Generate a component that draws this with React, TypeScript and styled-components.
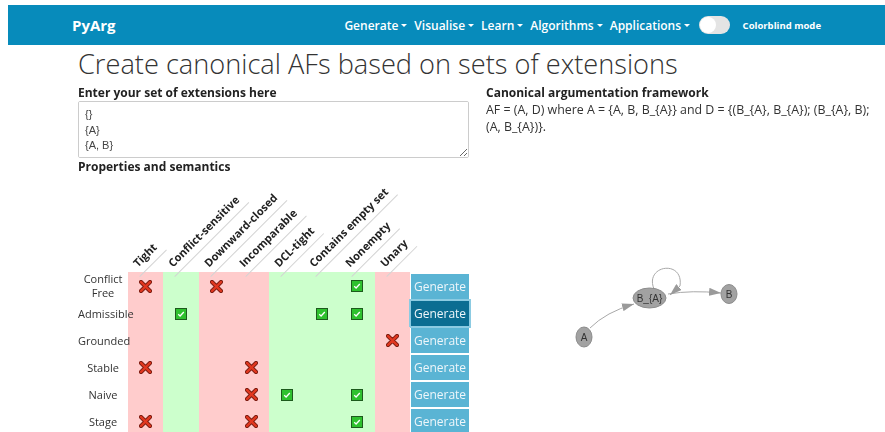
import styled, { createGlobalStyle } from 'styled-components';

const GlobalStyle = createGlobalStyle`
  body {
    margin: 0;
    font-family: "Open Sans", "Liberation Sans", sans-serif;
    color: #333;
    background: #fff;
  }
`;

type Mark = 'x' | 'ok';

const properties = [
  { name: 'Tight', holds: false },
  { name: 'Conflict-sensitive', holds: true },
  { name: 'Downward-closed', holds: false },
  { name: 'Incomparable', holds: false },
  { name: 'DCL-tight', holds: true },
  { name: 'Contains empty set', holds: true },
  { name: 'Nonempty', holds: true },
  { name: 'Unary', holds: false },
];

const semantics: { name: string; marks: Record<number, Mark>; active?: boolean }[] = [
  { name: 'Conflict Free', marks: { 0: 'x', 2: 'x', 6: 'ok' } },
  { name: 'Admissible', marks: { 1: 'ok', 5: 'ok', 6: 'ok' }, active: true },
  { name: 'Grounded', marks: { 7: 'x' } },
  { name: 'Stable', marks: { 0: 'x', 3: 'x' } },
  { name: 'Naive', marks: { 3: 'x', 4: 'ok', 6: 'ok' } },
  { name: 'Stage', marks: { 0: 'x', 3: 'x', 6: 'ok' } },
];

const CrossIcon = () => (
  <svg width="13" height="13" viewBox="0 0 13 13">
    <path d="M2 2 L11 11 M11 2 L2 11" stroke="#7a1d12" strokeWidth="4.2" strokeLinecap="round" />
    <path d="M2 2 L11 11 M11 2 L2 11" stroke="#e2371f" strokeWidth="2.4" strokeLinecap="round" />
  </svg>
);

const CheckIcon = () => (
  <svg width="12" height="12" viewBox="0 0 12 12">
    <rect x="0.5" y="0.5" width="11" height="11" fill="#2ec12e" stroke="#1d5a1d" />
    <path d="M3.2 6.3 L5.1 8 L8.8 4" fill="none" stroke="#fff" strokeWidth="1.3" />
  </svg>
);

export default function App() {
  return (
    <>
      <GlobalStyle />
      <Page>
        <Navbar>
          <Brand>PyArg</Brand>
          <NavRight>
            {['Generate', 'Visualise', 'Learn', 'Algorithms', 'Applications'].map((item) => (
              <NavItem key={item}>
                {item}
                <Caret />
              </NavItem>
            ))}
            <Switch>
              <Knob />
            </Switch>
            <SwitchLabel>Colorblind mode</SwitchLabel>
          </NavRight>
        </Navbar>

        <Main>
          <Title>Create canonical AFs based on sets of extensions</Title>
          <Columns>
            <LeftCol>
              <Label>Enter your set of extensions here</Label>
              <ExtensionsInput defaultValue={'{}\n{A}\n{A, B}'} />
              <Label>Properties and semantics</Label>
              <PropTable>
                <colgroup>
                  <col style={{ width: 50 }} />
                  {properties.map((p) => (
                    <col key={p.name} style={{ width: 35.25 }} />
                  ))}
                  <col style={{ width: 59 }} />
                </colgroup>
                <thead>
                  <tr>
                    <HeadCell />
                    {properties.map((p) => (
                      <HeadCell key={p.name}>
                        <HeadLabel>{p.name}</HeadLabel>
                      </HeadCell>
                    ))}
                    <HeadCell />
                  </tr>
                </thead>
                <tbody>
                  {semantics.map((s) => (
                    <tr key={s.name}>
                      <RowName>{s.name}</RowName>
                      {properties.map((p, i) => (
                        <MarkCell key={p.name} $holds={p.holds}>
                          {s.marks[i] === 'x' && <CrossIcon />}
                          {s.marks[i] === 'ok' && <CheckIcon />}
                        </MarkCell>
                      ))}
                      <ButtonCell>
                        <GenerateButton $active={s.active}>Generate</GenerateButton>
                      </ButtonCell>
                    </tr>
                  ))}
                </tbody>
              </PropTable>
            </LeftCol>

            <RightCol>
              <Label>Canonical argumentation framework</Label>
              <Description>
                AF = (A, D) where A = {'{A, B, B_{A}}'} and D = {'{(B_{A}, B_{A}); (B_{A}, B); (A, B_{A})}'}.
              </Description>
              <Graph width="399" height="292" viewBox="0 0 399 292">
                <defs>
                  <marker
                    id="arrowhead"
                    viewBox="0 0 12 8"
                    refX="12"
                    refY="4"
                    markerWidth="12"
                    markerHeight="8"
                    markerUnits="userSpaceOnUse"
                    orient="auto"
                  >
                    <path d="M0 0 L12 4 L0 8 Z" fill="#9a9a9a" />
                  </marker>
                </defs>
                {/* A -> B_{A} */}
                <Edge d="M104 187 Q120 171 148 163" markerEnd="url(#arrowhead)" />
                {/* B_{A} -> B */}
                <Edge d="M182 153 Q206 149 235 152" markerEnd="url(#arrowhead)" />
                {/* B_{A} attacks itself */}
                <Edge d="M168 148 C158 124 198 118 194 145 L184 154" markerEnd="url(#arrowhead)" />
                <Node cx="163.5" cy="157" rx="16.5" ry="10" />
                <NodeText x="163.5" y="160.5">B_{'{A}'}</NodeText>
                <Node cx="243" cy="153" rx="8" ry="9.5" />
                <NodeText x="243" y="156.5">B</NodeText>
                <Node cx="98" cy="196" rx="8" ry="10" />
                <NodeText x="98" y="199.5">A</NodeText>
              </Graph>
            </RightCol>
          </Columns>
        </Main>
      </Page>
    </>
  );
}

const Page = styled.div`
  padding: 5px 0 0 8px;
  overflow: hidden;
  height: 427px;
`;

const Navbar = styled.nav`
  height: 40px;
  background: #078bbb;
  display: flex;
  align-items: center;
  justify-content: space-between;
  padding: 0 64px;
`;

const Brand = styled.div`
  color: #fff;
  font-size: 15px;
  font-weight: 700;
`;

const NavRight = styled.div`
  display: flex;
  align-items: center;
`;

const NavItem = styled.div`
  color: #fff;
  font-size: 12px;
  font-weight: 600;
  padding: 0 3.5px;
  display: flex;
  align-items: center;
`;

const Caret = styled.span`
  display: inline-block;
  margin-left: 3px;
  border-left: 3px solid transparent;
  border-right: 3px solid transparent;
  border-top: 3px solid #fff;
`;

const Switch = styled.div`
  width: 31px;
  height: 18px;
  border-radius: 9px;
  background: #e4e4e4;
  margin-left: 5px;
  display: flex;
  align-items: center;
  padding: 0 1px;
  box-sizing: border-box;
`;

const Knob = styled.div`
  width: 16px;
  height: 16px;
  border-radius: 50%;
  background: #fff;
`;

const SwitchLabel = styled.div`
  color: #fff;
  font-size: 9.5px;
  font-weight: 700;
  margin-left: 13px;
`;

const Main = styled.main`
  padding-left: 70px;
`;

const Title = styled.h1`
  margin: 2px 0 0;
  font-size: 27.2px;
  font-weight: 300;
  line-height: 34px;
  color: #333;
`;

const Columns = styled.div`
  display: flex;
  gap: 16px;
  margin-top: 3px;
`;

const LeftCol = styled.div`
  width: 392px;
  flex-shrink: 0;
`;

const RightCol = styled.div`
  flex: 1;
  min-width: 0;
  padding-right: 10px;
`;

const Label = styled.div`
  font-size: 12px;
  font-weight: 700;
  line-height: 17px;
  color: #222;
`;

const ExtensionsInput = styled.textarea`
  display: block;
  width: 391px;
  height: 57px;
  box-sizing: border-box;
  margin: 0;
  padding: 5px 6px;
  font-family: "Liberation Sans", Arial, sans-serif;
  font-size: 11px;
  line-height: 15.5px;
  color: #444;
  border: 1px solid #ccc;
  border-radius: 2px;
  resize: vertical;
`;

const Description = styled.div`
  font-size: 12.4px;
  line-height: 17px;
  color: #333;
`;

const PropTable = styled.table`
  border-collapse: collapse;
  border-spacing: 0;
  table-layout: fixed;
  width: 391px;
`;

const HeadCell = styled.th`
  height: 97px;
  padding: 0;
  position: relative;
`;

const HeadLabel = styled.div`
  position: absolute;
  left: 12px;
  bottom: -5px;
  transform: rotate(-45deg);
  transform-origin: 0 100%;
  white-space: nowrap;
  font-size: 11px;
  font-weight: 700;
  line-height: 13px;
  color: #222;
  padding: 0 5px 5px;
  border-bottom: 1px solid #d4d4d4;
  z-index: 1;
`;

const RowName = styled.td`
  font-size: 11px;
  line-height: 14px;
  color: #333;
  text-align: center;
  padding: 0;
  height: 27px;
`;

const MarkCell = styled.td<{ $holds: boolean }>`
  background: ${({ $holds }) => ($holds ? '#ccffcc' : '#ffcccc')};
  text-align: center;
  vertical-align: middle;
  padding: 0;
  svg {
    display: block;
    margin: 0 auto;
  }
`;

const ButtonCell = styled.td`
  padding: 1px 0 1px 1px;
`;

const GenerateButton = styled.button<{ $active?: boolean }>`
  display: block;
  width: 58px;
  height: 25px;
  border: none;
  border-radius: 0;
  padding: 0;
  font-family: "Open Sans", sans-serif;
  font-size: 12px;
  color: #eef6fa;
  background: ${({ $active }) => ($active ? '#0b6d92' : '#5ab4d4')};
  box-shadow: ${({ $active }) => ($active ? '0 0 0 2px #8ccbe2' : 'none')};
`;

const Graph = styled.svg`
  display: block;
  margin-top: 6px;
`;

const Edge = styled.path`
  fill: none;
  stroke: #a8a8a8;
  stroke-width: 1;
`;

const Node = styled.ellipse`
  fill: #a2a2a2;
  stroke: #8c8c8c;
  stroke-width: 1;
`;

const NodeText = styled.text`
  font-family: "Liberation Sans", Arial, sans-serif;
  font-size: 10px;
  fill: #333;
  text-anchor: middle;
`;
